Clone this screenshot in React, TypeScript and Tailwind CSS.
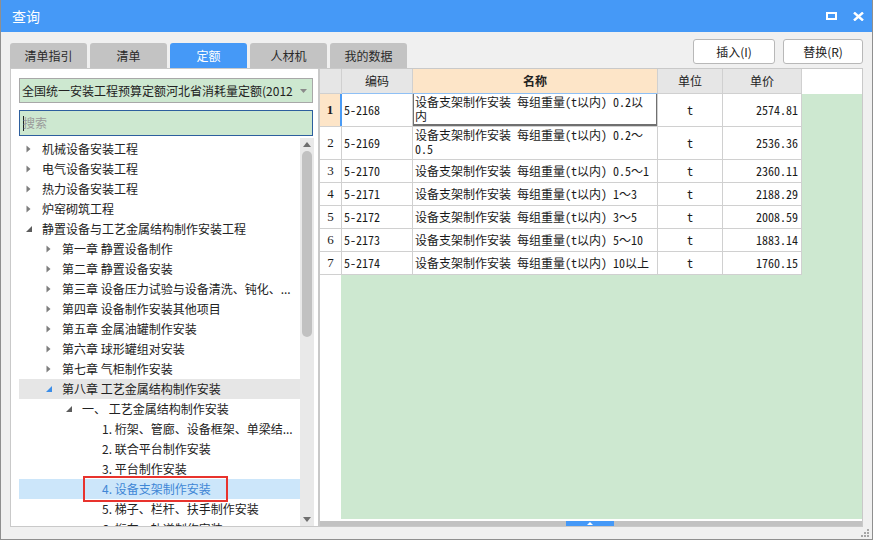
import React from "react";

const ui = "font-['Noto_Sans_CJK_SC','Noto_Sans',sans-serif]";
const mono = "font-['Noto_Sans_Mono_CJK_SC','Liberation_Mono','Noto_Sans_CJK_SC',monospace]";

type TNode = {
  level: 0 | 1 | 2 | 3;
  text: string;
  arrow?: "closed" | "open";
  state?: "hover" | "selected";
};

const nodes: TNode[] = [
  { level: 0, text: "机械设备安装工程", arrow: "closed" },
  { level: 0, text: "电气设备安装工程", arrow: "closed" },
  { level: 0, text: "热力设备安装工程", arrow: "closed" },
  { level: 0, text: "炉窑砌筑工程", arrow: "closed" },
  { level: 0, text: "静置设备与工艺金属结构制作安装工程", arrow: "open" },
  { level: 1, text: "第一章 静置设备制作", arrow: "closed" },
  { level: 1, text: "第二章 静置设备安装", arrow: "closed" },
  { level: 1, text: "第三章 设备压力试验与设备清洗、钝化、...", arrow: "closed" },
  { level: 1, text: "第四章 设备制作安装其他项目", arrow: "closed" },
  { level: 1, text: "第五章 金属油罐制作安装", arrow: "closed" },
  { level: 1, text: "第六章 球形罐组对安装", arrow: "closed" },
  { level: 1, text: "第七章 气柜制作安装", arrow: "closed" },
  { level: 1, text: "第八章 工艺金属结构制作安装", arrow: "open", state: "hover" },
  { level: 2, text: "一、 工艺金属结构制作安装", arrow: "open" },
  { level: 3, text: "1. 桁架、管廊、设备框架、单梁结..." },
  { level: 3, text: "2. 联合平台制作安装" },
  { level: 3, text: "3. 平台制作安装" },
  { level: 3, text: "4. 设备支架制作安装", state: "selected" },
  { level: 3, text: "5. 梯子、栏杆、扶手制作安装" },
  { level: 3, text: "6. 桁车、轨道制作安装" },
];

const indent = ["pl-[7px]", "pl-[27px]", "pl-[47px]", "pl-[67px]"];

function Arrow({ kind, blue }: { kind?: "closed" | "open"; blue?: boolean }) {
  if (!kind) return null;
  if (kind === "closed")
    return (
      <svg width="5" height="8" viewBox="0 0 5 8">
        <path d="M0.5 0.5 L4.5 4 L0.5 7.5Z" fill="#7d7d7d" />
      </svg>
    );
  return (
    <svg width="6" height="6" viewBox="0 0 6 6">
      <path d="M6 0 L6 6 L0 6Z" fill={blue ? "#3b8de8" : "#5c5c5c"} />
    </svg>
  );
}

type Row = { n: number; code: string; name: string[]; price: string; tall?: boolean };

const rows: Row[] = [
  { n: 1, code: "5-2168", name: ["设备支架制作安装 每组重量(t以内) 0.2以", "内"], price: "2574.81", tall: true },
  { n: 2, code: "5-2169", name: ["设备支架制作安装 每组重量(t以内) 0.2～", "0.5"], price: "2536.36", tall: true },
  { n: 3, code: "5-2170", name: ["设备支架制作安装 每组重量(t以内) 0.5～1"], price: "2360.11" },
  { n: 4, code: "5-2171", name: ["设备支架制作安装 每组重量(t以内) 1～3"], price: "2188.29" },
  { n: 5, code: "5-2172", name: ["设备支架制作安装 每组重量(t以内) 3～5"], price: "2008.59" },
  { n: 6, code: "5-2173", name: ["设备支架制作安装 每组重量(t以内) 5～10"], price: "1883.14" },
  { n: 7, code: "5-2174", name: ["设备支架制作安装 每组重量(t以内) 10以上"], price: "1760.15" },
];

const tabs = ["清单指引", "清单", "定额", "人材机", "我的数据"];

export default function App() {
  return (
    <div className={`w-[873px] h-[540px] bg-[#f0f0f0] border-x border-b border-[#8f8f8f] flex flex-col overflow-hidden ${ui}`}>
      {/* title bar */}
      <div className="h-[32px] shrink-0 bg-[#4599f7] flex items-center text-white">
        <span className="ml-[11px] text-[14px] leading-none">查询</span>
        <div className="ml-auto mr-[8px] flex items-center gap-[16px]">
          <svg width="11" height="8" viewBox="0 0 11 8">
            <rect x="1" y="1" width="9" height="6" fill="none" stroke="#fff" strokeWidth="2" />
          </svg>
          <svg width="11" height="9" viewBox="0 0 11 9">
            <path d="M1 0.5 L10 8.5 M10 0.5 L1 8.5" stroke="#fff" strokeWidth="2.4" />
          </svg>
        </div>
      </div>

      {/* toolbar */}
      <div className="h-[36px] shrink-0 flex px-[9px]">
        <div className="flex items-end gap-[3px]">
          {tabs.map((t) => (
            <div
              key={t}
              className={`w-[77px] h-[25px] rounded-t-[3px] flex items-center justify-center text-[12px] ${
                t === "定额" ? "bg-[#4599f7] text-white" : "bg-[#c3c3c3] text-[#2a2a2a]"
              }`}
            >
              {t}
            </div>
          ))}
        </div>
        <div className="ml-auto mt-[7px] flex gap-[8px] h-[25px]">
          <div className="w-[82px] h-[25px] bg-white border border-[#b8b8b8] rounded-[3px] flex items-center justify-center text-[12px] text-[#222]">
            插入(I)
          </div>
          <div className="w-[80px] h-[25px] bg-white border border-[#b8b8b8] rounded-[3px] flex items-center justify-center text-[12px] text-[#222]">
            替换(R)
          </div>
        </div>
      </div>

      {/* content */}
      <div className="h-[459px] shrink-0 flex px-[9px]">
        {/* left panel */}
        <div className="w-[309px] h-full border border-[#c9c9c9] bg-white flex flex-col">
          <div className="ml-[8px] mt-[9px] w-[294px] h-[25px] border border-[#a8a8a8] bg-[#cde8d0] flex items-center pl-[2px] pr-[5px]">
            <span className="text-[12px] text-[#222] whitespace-nowrap overflow-hidden flex-1">
              全国统一安装工程预算定额河北省消耗量定额(2012
            </span>
            <svg width="7" height="4" viewBox="0 0 7 4" className="ml-[4px]">
              <path d="M0 0 L7 0 L3.5 4Z" fill="#8a8a8a" />
            </svg>
          </div>
          <div className="ml-[8px] mt-[7px] w-[294px] h-[26px] border border-[#2d5f9e] bg-[#cde8d0] flex items-center pl-[3px]">
            <div className="w-[1px] h-[15px] bg-[#222]" />
            <span className="text-[12px] text-[#9a9a9a] ml-[-1px]">搜索</span>
          </div>
          <div className="mt-[2px] flex-1 min-h-0 flex">
            <div className="ml-[8px] w-[281px] overflow-hidden pt-[1px]">
              {nodes.map((n, i) => {
                const sel = n.state === "selected";
                const hov = n.state === "hover";
                return (
                  <div
                    key={i}
                    className={`relative flex items-center h-[20px] ${indent[n.level]} ${
                      hov ? "bg-[#e6e6e6]" : sel ? "bg-[#cce6fa]" : ""
                    }`}
                  >
                    <div className="w-[16px] h-[20px] flex items-center">
                      <Arrow kind={n.arrow} blue={hov} />
                    </div>
                    <span
                      className={`whitespace-nowrap text-[12px] leading-[20px] ${
                        sel ? "text-[#3f86d6]" : "text-[#222]"
                      }`}
                    >
                      {n.text}
                    </span>
                    {sel && (
                      <div className="absolute left-[64px] top-[-3px] w-[145px] h-[26px] border-2 border-[#e8332d]" />
                    )}
                  </div>
                );
              })}
            </div>
            <div className="w-[14px] h-full bg-[#e9e9e9] flex flex-col items-center">
              <svg width="8" height="5" viewBox="0 0 8 5" className="mt-[4px]">
                <path d="M0 5 L8 5 L4 0Z" fill="#6f6f6f" />
              </svg>
              <div className="mt-[4px] w-[10px] h-[186px] rounded-full bg-[#c1c1c1]" />
              <div className="flex-1" />
              <svg width="8" height="5" viewBox="0 0 8 5" className="mb-[4px]">
                <path d="M0 0 L8 0 L4 5Z" fill="#6f6f6f" />
              </svg>
            </div>
          </div>
        </div>

        {/* table */}
        <div className={`w-[544px] h-full border border-[#c9c9c9] bg-white flex flex-col ${mono}`}>
          {/* header */}
          <div className={`flex h-[25px] shrink-0 bg-white text-[12px] text-[#222] ${ui}`}>
            <div className="w-[22px] h-full bg-[#e6e6e6] border-r border-b border-[#d0d0d0]" />
            <div className="w-[71px] h-full bg-[#e6e6e6] border-r border-[#d0d0d0] border-b border-b-[#8fc0f5] flex items-center justify-center">
              编码
            </div>
            <div className="w-[245px] h-full bg-[#fde5c8] border-r border-[#d0d0d0] border-b border-b-[#8fc0f5] flex items-center justify-center font-bold">
              名称
            </div>
            <div className="w-[65px] h-full bg-[#e6e6e6] border-r border-b border-[#d0d0d0] flex items-center justify-center">
              单位
            </div>
            <div className="w-[79px] h-full bg-[#e6e6e6] border-r border-b border-[#d0d0d0] flex items-center justify-center">
              单价
            </div>
          </div>

          {/* body */}
          <div className="flex-1 min-h-0 flex flex-col bg-[#cde8d0]">
            <div className="w-[482px] bg-white text-[12px] text-[#1a1a1a]">
              {rows.map((r) => {
                const first = r.n === 1;
                return (
                  <div
                    key={r.n}
                    className={`flex border-b border-[#d0d0d0] ${r.tall ? "h-[33px]" : "h-[23px]"}`}
                  >
                    <div
                      className={`w-[22px] h-full flex items-center justify-center font-['Liberation_Serif',serif] text-[13px] ${
                        first ? "bg-[#fde5c8] font-bold border-r-2 border-[#4a9bf5]" : "border-r border-[#d0d0d0]"
                      }`}
                    >
                      {r.n}
                    </div>
                    <div className="w-[71px] h-full border-r border-[#d0d0d0] flex items-center pl-[2px]">
                      {r.code}
                    </div>
                    <div
                      className={`relative w-[245px] h-full border-r border-[#d0d0d0] pl-[2px] whitespace-nowrap overflow-hidden ${
                        r.tall ? "pt-[1px] leading-[14px]" : "flex items-center"
                      }`}
                    >
                      {r.name.map((l, i) => (
                        <div key={i}>{l}</div>
                      ))}
                      {first && (
                        <div className="absolute left-[-1px] right-[-1px] top-0 bottom-0 border-2 border-t-0 border-[#707070]" />
                      )}
                    </div>
                    <div className="w-[65px] h-full border-r border-[#d0d0d0] flex items-center justify-center">
                      t
                    </div>
                    <div className="w-[79px] h-full border-r border-[#d0d0d0] flex items-center justify-end pr-[3px]">
                      {r.price}
                    </div>
                  </div>
                );
              })}
            </div>
            <div className="flex-1 flex">
              <div className="w-[21px] bg-white" />
            </div>
          </div>
          <div className="h-[2px] shrink-0 bg-white" />
          <div className="h-[5px] shrink-0 bg-[#c2c2c2] relative">
            <div className="absolute left-[246px] top-0 w-[48px] h-full bg-[#4599f7] flex items-center justify-center">
              <svg width="6" height="3" viewBox="0 0 6 3">
                <path d="M0 3 L6 3 L3 0Z" fill="#fff" />
              </svg>
            </div>
          </div>
        </div>
      </div>

      {/* bottom strip */}
      <div className="flex-1 relative">
        <svg width="9" height="9" viewBox="0 0 9 9" className="absolute right-[2px] bottom-[1px]">
          <rect x="6" y="0" width="2" height="2" fill="#a6a6a6" />
          <rect x="3" y="3" width="2" height="2" fill="#a6a6a6" />
          <rect x="6" y="3" width="2" height="2" fill="#a6a6a6" />
          <rect x="0" y="6" width="2" height="2" fill="#a6a6a6" />
          <rect x="3" y="6" width="2" height="2" fill="#a6a6a6" />
          <rect x="6" y="6" width="2" height="2" fill="#a6a6a6" />
        </svg>
      </div>
    </div>
  );
}
